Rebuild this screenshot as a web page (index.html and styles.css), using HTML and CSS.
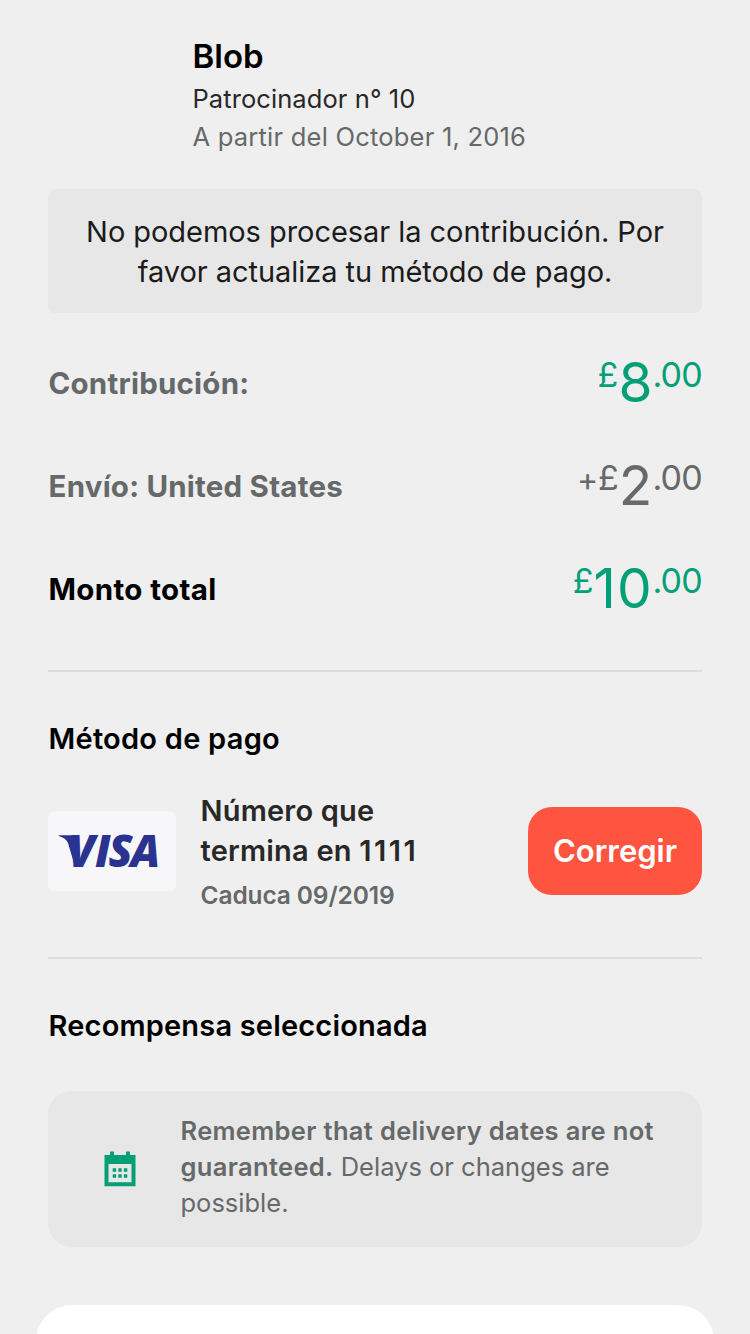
FILE: index.html
```html
<!DOCTYPE html>
<html lang="es">
<head>
<meta charset="utf-8">
<title>Contribución</title>
<link rel="stylesheet" href="styles.css">
</head>
<body>
<main class="page">
  <header class="backer">
    <h1 class="backer-name">Blob</h1>
    <p class="backer-number">Patrocinador n° 10</p>
    <p class="backer-date">A partir del October 1, 2016</p>
  </header>

  <p class="notice">No podemos procesar la contribución. Por<br>favor actualiza tu método de pago.</p>

  <section class="summary">
    <div class="row">
      <span class="label">Contribución:</span>
      <span class="amount green"><span class="small">£</span><span class="big">8</span><span class="small cents">.00</span></span>
    </div>
    <div class="row">
      <span class="label">Envío: United States</span>
      <span class="amount"><span class="small plus">+</span><span class="small">£</span><span class="big">2</span><span class="small cents">.00</span></span>
    </div>
    <div class="row">
      <span class="label label-total">Monto total</span>
      <span class="amount green"><span class="small">£</span><span class="big big-total">10</span><span class="small cents">.00</span></span>
    </div>
  </section>

  <section class="payment">
    <h2 class="title">Método de pago</h2>
    <div class="method">
      <svg class="card-logo" viewBox="0 0 128 80" role="img" aria-label="Visa">
        <text class="visa" x="20 47 60.500 82.500" y="55.800">VISA</text>
        <path class="visa-mark" d="M10.700 24.200H25.500Q27.500 24.200 28 27L31.500 46L27 55.800L20 32Q18 27 10.700 25Z"/>
      </svg>
      <div class="card-info">
        <p class="card-number">Número que<br>termina en <span class="digits">1111</span></p>
        <p class="card-expiry">Caduca 09/2019</p>
      </div>
      <button class="fix" type="button">Corregir</button>
    </div>
  </section>

  <section class="reward">
    <h2 class="title title-reward">Recompensa seleccionada</h2>
    <div class="reminder">
      <svg class="calendar" viewBox="0 0 32 36" aria-hidden="true">
        <path fill-rule="evenodd" d="M0.500 4H6V0.500H10V4H22V0.500H26V4H31.500V35.300H0.500ZM4.500 13V31.300H27.500V13Z"/>
        <path d="M8.700 17.300h3.400v3.400h-3.400zM14.300 17.300h3.400v3.400h-3.400zM19.900 17.300h3.400v3.400h-3.400zM8.700 23.300h3.400v3.400h-3.400zM14.300 23.300h3.400v3.400h-3.400zM19.900 23.300h3.400v3.400h-3.400z"/>
      </svg>
      <p class="reminder-text"><strong>Remember that delivery dates are not<br>guaranteed.</strong> Delays or changes are<br>possible.</p>
    </div>
  </section>

  <div class="reward-card"></div>
</main>
</body>
</html>
```

FILE: styles.css
```css
* { box-sizing: border-box; }
body {
  margin: 0;
  background: #efefef;
  color: #656969;
  font-family: Inter, "Noto Sans", sans-serif;
}
h1, h2, p { margin: 0; white-space: nowrap; }
.page {
  height: 1334px;
  overflow: hidden;
  padding: 36px 48px 0;
  display: flex;
  flex-direction: column;
}
.page > * { flex: none; }

.backer { padding-left: 144.500px; height: 153px; }
.backer-name { font-size: 33px; line-height: 40px; font-weight: 600; color: #000; }
.backer-number { font-size: 25.5px; line-height: 38px; padding-top: 4px; letter-spacing: 0.08px; color: #282828; }
.backer-date { font-size: 25.5px; line-height: 38px; letter-spacing: 0.22px; }

.notice {
  height: 124px;
  padding-top: 23px;
  border-radius: 8px;
  background: #e7e7e7;
  color: #1b1b1b;
  font-size: 29px;
  line-height: 40px;
  letter-spacing: -0.05px;
  text-align: center;
}

.summary { height: 359px; padding-top: 19px; border-bottom: 2px solid #dcdcdc; }
.row { height: 103px; display: flex; justify-content: space-between; align-items: center; }
.label { font-size: 29.5px; font-weight: 700; line-height: 36px; letter-spacing: 0.22px; padding: 0 0 2px 0.5px; }
.label-total { letter-spacing: 0.35px; color: #000; }
.amount { display: flex; align-items: flex-start; line-height: 56px; padding-bottom: 3px; }
.green { color: #03a077; }
.big { font-size: 55px; }
.big-total { letter-spacing: 1.2px; }
.small { font-size: 34px; line-height: 42px; }
.plus { font-size: 32px; line-height: 45px; }
.cents { letter-spacing: -0.75px; }
.big-total + .cents { margin-left: -0.5px; }

.payment { height: 287px; padding-top: 47px; border-bottom: 2px solid #dcdcdc; }
.title { font-size: 29px; line-height: 40px; font-weight: 600; letter-spacing: 0.25px; padding-left: 0.5px; color: #000; }
.title-reward { letter-spacing: 0.18px; }
.method { display: flex; align-items: center; height: 120px; margin-top: 32px; }
.card-logo { width: 128px; height: 80px; border-radius: 6px; background: #f7f7fa; flex: none; }
.visa { font: italic 800 44px "Open Sans", sans-serif; fill: #2a3490; }
.visa-mark { fill: #2a3490; }
.card-info { margin-left: 24.500px; padding-top: 1px; flex: 1; }
.card-number { font-size: 29px; line-height: 40px; font-weight: 600; letter-spacing: 0.2px; color: #282828; }
.digits { letter-spacing: 2.5px; }
.card-expiry { font-size: 24.5px; line-height: 36px; padding-top: 6px; font-weight: 600; letter-spacing: -0.12px; }
.fix {
  width: 174px;
  height: 88px;
  border: 0;
  border-radius: 24px;
  padding: 0 0 2px;
  background: #ff5440;
  color: #fff;
  font: 600 31px Inter, sans-serif;
}

.reward { padding-top: 47px; }
.reminder {
  height: 156px;
  margin-top: 45px;
  padding-left: 56px;
  display: flex;
  align-items: center;
  border-radius: 24px;
  background: #e7e7e7;
}
.calendar { width: 32px; height: 36px; fill: #03a077; flex: none; }
.reminder-text { margin-left: 44.500px; padding-bottom: 5px; font-size: 25.5px; line-height: 36px; }
.reminder-text strong { font-weight: 600; letter-spacing: 0.34px; }
.reward-card {
  height: 120px;
  margin: 58px -12px 0;
  border-radius: 36px 36px 0 0;
  background: #fff;
}
```
